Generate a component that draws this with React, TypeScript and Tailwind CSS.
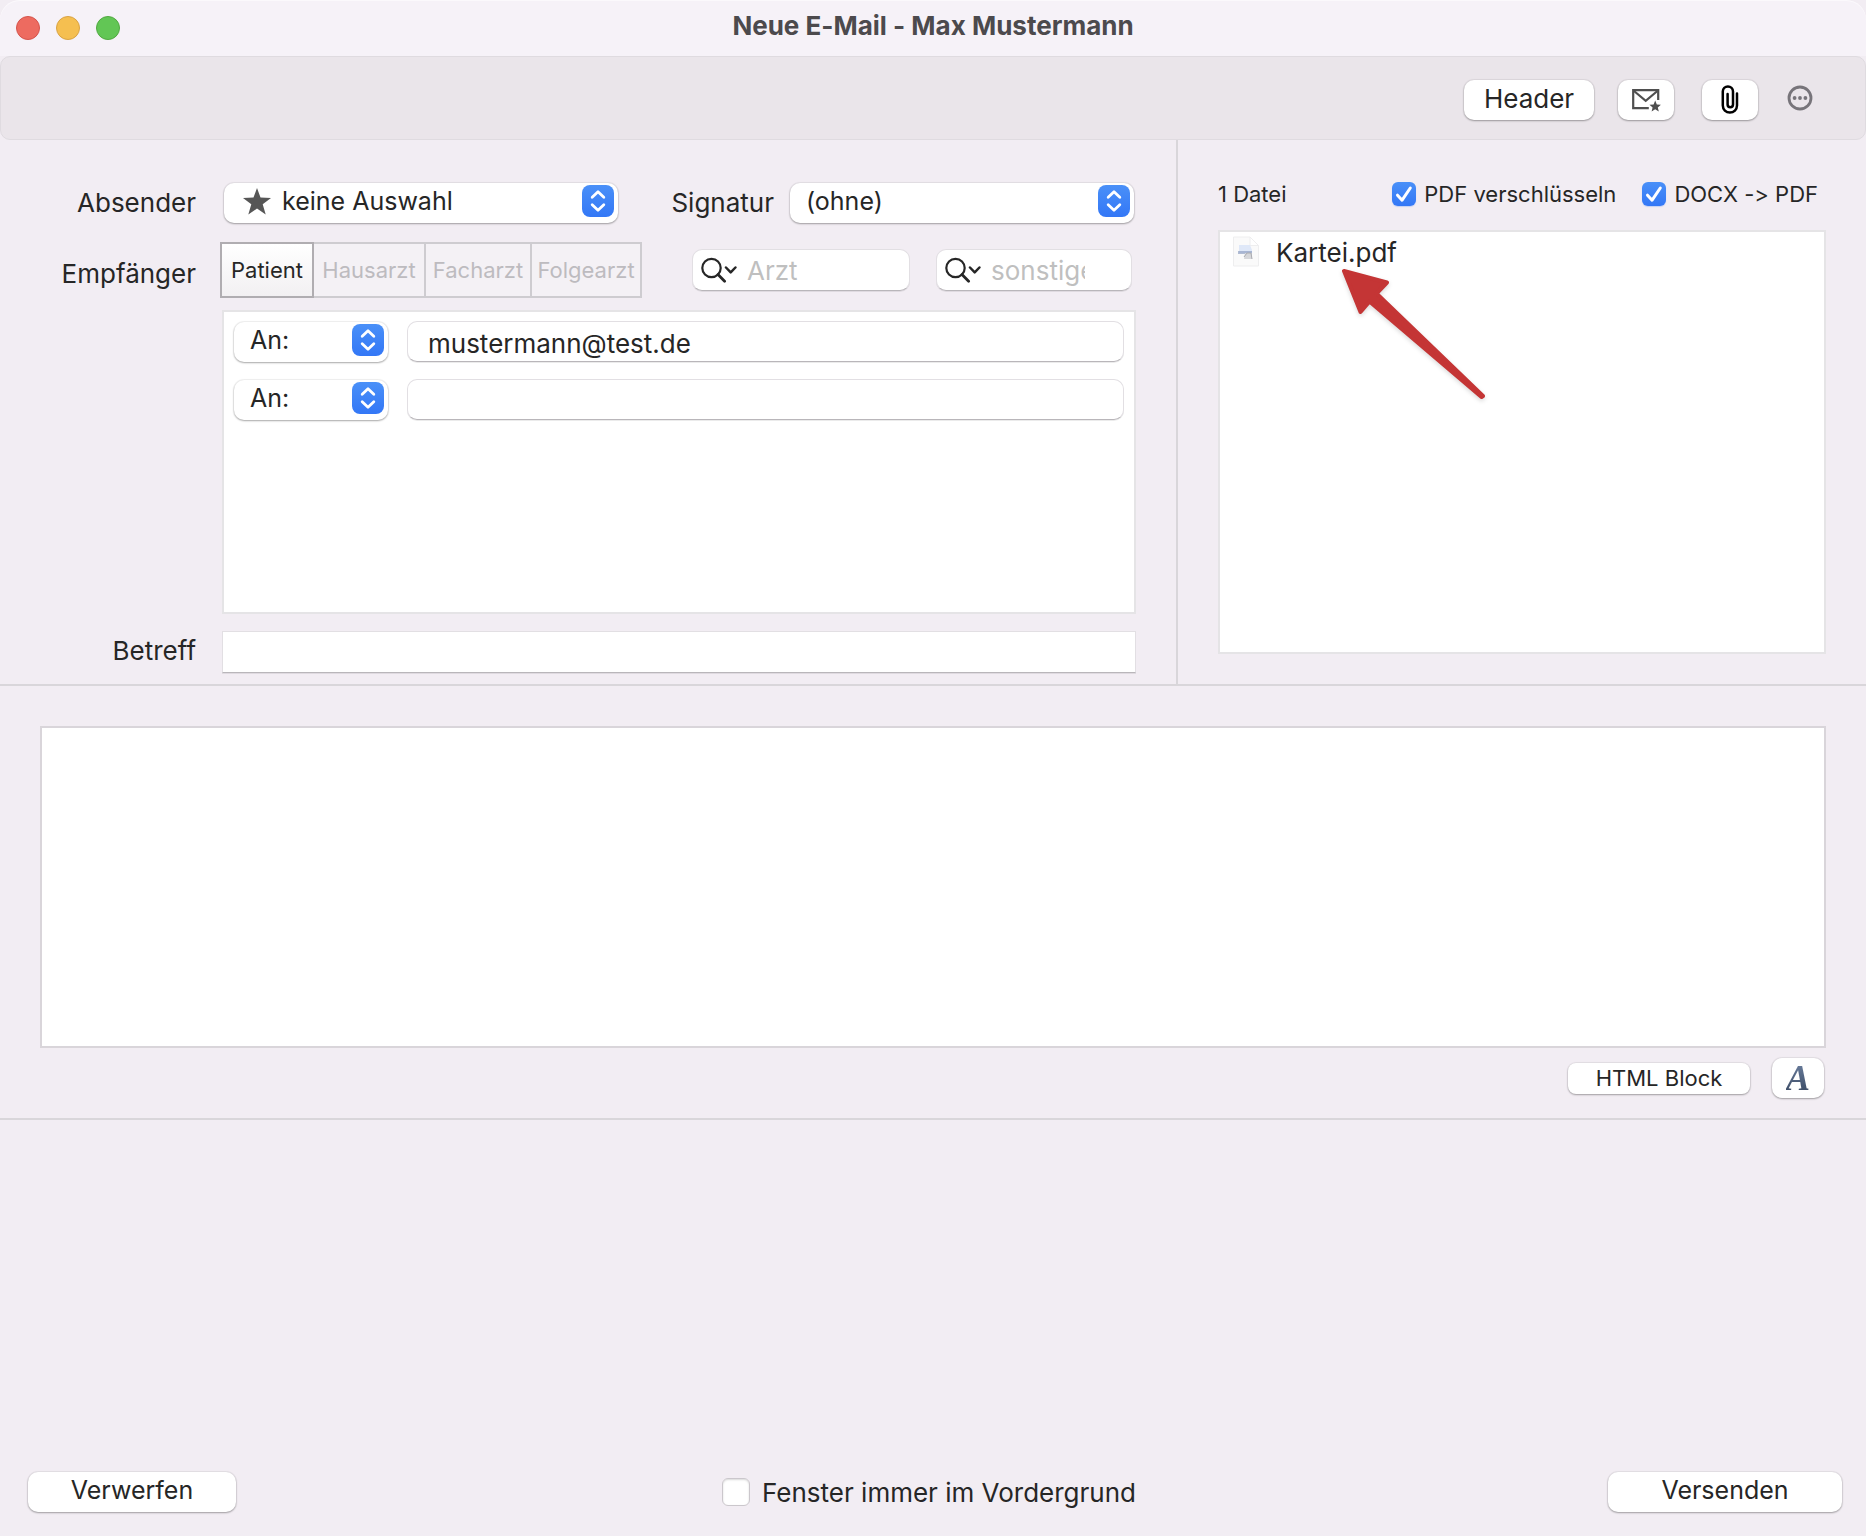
import { useState } from 'react'
import type { ReactNode } from 'react'

const raised = 'bg-white shadow-[0_0_1px_1px_rgba(0,0,0,0.06),0_1px_2px_rgba(0,0,0,0.3)]'
const field = 'border border-[#e2dfe3] border-b-[#b9b6ba] bg-white shadow-[0_1px_0_rgba(0,0,0,0.08)] outline-none'

interface PopupProps {
  label: string
  options: string[]
  className: string
  selectClass: string
  icon?: ReactNode
  id?: string
}

function Popup({ label, options, className, selectClass, icon, id }: PopupProps) {
  return (
    <div className={`relative h-10 shrink-0 ${className}`}>
      <select
        id={id}
        aria-label={label}
        className={`h-full w-full appearance-none rounded-[10px] pb-1 text-[25px] text-[#262626] outline-none ${raised} ${selectClass}`}
      >
        {options.map(o => (
          <option key={o}>{o}</option>
        ))}
      </select>
      {icon}
      <svg viewBox="0 0 32 32" className="pointer-events-none absolute top-1 right-1 h-8 w-8">
        <defs>
          <linearGradient id="popupBlue" x1="0" y1="0" x2="0" y2="1">
            <stop offset="0" stopColor="#4a90f8" />
            <stop offset="1" stopColor="#3377f6" />
          </linearGradient>
        </defs>
        <rect width="32" height="32" rx="8" fill="url(#popupBlue)" />
        <path
          d="M10.2 12.2 16 6.8l5.8 5.4M10.2 19.8l5.8 5.4 5.8-5.4"
          fill="none"
          stroke="#fff"
          strokeWidth="2.8"
          strokeLinecap="round"
          strokeLinejoin="round"
        />
      </svg>
    </div>
  )
}

function StarIcon() {
  return (
    <svg viewBox="0 0 28 27" className="pointer-events-none absolute top-[7px] left-[19px] h-[27px] w-7">
      <path fill="#565656" d="M14 0l3.5 9.6 10.5.4-8.3 6.3 3 10.2L14 20.6 5.3 26.5l3-10.2L0 10l10.5-.4z" />
    </svg>
  )
}

function SearchField({ name, placeholder, className }: { name: string; placeholder: string; className: string }) {
  return (
    <div className={`flex h-[42px] shrink-0 items-center rounded-[10px] pl-2 ${field} ${className}`}>
      <svg viewBox="0 0 36 26" className="h-[26px] w-9 shrink-0" fill="none" stroke="#262626" strokeLinecap="round">
        <circle cx="10.5" cy="11" r="9.2" strokeWidth="2.2" />
        <path d="M17 17.6l6.6 6.6" strokeWidth="2.8" />
        <path d="M25 10.5l4.7 4.8 4.7-4.8" strokeWidth="2.5" strokeLinejoin="round" />
      </svg>
      <input
        type="text"
        name={name}
        aria-label={name}
        placeholder={placeholder}
        className="ml-2.5 w-full min-w-0 bg-transparent text-[26px] outline-none placeholder:text-[#bfbfbf]"
      />
    </div>
  )
}

function CheckBox({ label, on = false, small = false }: { label: string; on?: boolean; small?: boolean }) {
  const [checked, setChecked] = useState(on)
  return (
    <label className={`flex items-center ${small ? 'gap-2 text-[22px]' : 'gap-3 pr-3 text-[26px]'}`}>
      <span className={`relative ${small ? 'h-6 w-6' : 'h-7 w-7'}`}>
        <input
          type="checkbox"
          checked={checked}
          onChange={e => setChecked(e.target.checked)}
          className="block h-full w-full appearance-none rounded-[6px] border border-[#cbc7cc] bg-white shadow-[inset_0_1px_2px_rgba(0,0,0,0.15)] checked:border-0 checked:bg-linear-to-b checked:from-[#4a90f8] checked:to-[#3377f6] checked:shadow-[0_1px_1px_rgba(51,119,246,0.25)]"
        />
        {checked && (
          <svg viewBox="0 0 24 24" className="pointer-events-none absolute inset-0">
            <path d="M5.5 13.2l4.6 5L18.3 6" fill="none" stroke="#fff" strokeWidth="3" strokeLinecap="round" strokeLinejoin="round" />
          </svg>
        )}
      </span>
      {label}
    </label>
  )
}

function Toolbar() {
  return (
    <div className="flex h-[84px] items-center justify-end rounded-[10px] border border-[#dfdbe0] bg-[#eae5ea] pt-1 pr-[52px]">
      <button className={`h-10 w-[130px] rounded-[10px] pb-0.5 text-[26px] leading-9 ${raised}`}>Header</button>
      <button aria-label="Vorlage" className={`ml-6 flex h-10 w-14 items-center justify-center rounded-[10px] ${raised}`}>
        <svg viewBox="0 0 30 24" className="h-6 w-[30px]">
          <path d="M27.2 12V2.1H2.2v18h15.6" fill="none" stroke="#4f4f4f" strokeWidth="2.2" />
          <path d="M3 3l11.7 9.8L26.4 3" fill="none" stroke="#4f4f4f" strokeWidth="2.2" />
          <path fill="#4f4f4f" d="M24.2 12.6l1.6 3.8 4.1.3-3.1 2.7 1 4-3.6-2.1-3.6 2.1 1-4-3.1-2.7 4.1-.3z" />
        </svg>
      </button>
      <button aria-label="Anhang" className={`ml-7 flex h-10 w-14 items-center justify-center rounded-[10px] ${raised}`}>
        <svg viewBox="0 0 18 30" className="h-[30px] w-[18px]">
          <path
            d="M16 8.5v12a7.1 7.1 0 0 1-14.2 0V6.6a5.1 5.1 0 0 1 10.2 0v13a2.7 2.7 0 0 1-5.4 0V9"
            fill="none"
            stroke="#000"
            strokeWidth="2.5"
            strokeLinecap="round"
          />
        </svg>
      </button>
      <button aria-label="Mehr" className="mb-1 ml-[29px]">
        <svg viewBox="0 0 26 26" className="h-[26px] w-[26px]" fill="#77747a">
          <circle cx="13" cy="13" r="11" fill="none" stroke="#77747a" strokeWidth="2.8" />
          <circle cx="7.6" cy="13" r="1.9" />
          <circle cx="13" cy="13" r="1.9" />
          <circle cx="18.4" cy="13" r="1.9" />
        </svg>
      </button>
    </div>
  )
}

const segments = [
  { label: 'Patient', width: 'w-[94px]' },
  { label: 'Hausarzt', width: 'w-28' },
  { label: 'Facharzt', width: 'w-[106px]' },
  { label: 'Folgearzt', width: 'w-[110px]' },
]

const recipients = ['mustermann@test.de', '']

function MailFields() {
  return (
    <section className="grid min-w-0 flex-1 grid-cols-[196px_1fr] gap-x-[26px] pt-[41px] pr-10 pb-[11px] text-[26px]">
      <label htmlFor="absender" className="h-10 pt-0.5 text-right leading-10">Absender</label>
      <div className="flex items-center justify-between px-0.5">
        <Popup
          id="absender"
          label="Absender"
          options={['keine Auswahl']}
          className="w-[394px]"
          selectClass="pl-[58px]"
          icon={<StarIcon />}
        />
        <div className="flex gap-4">
          <label htmlFor="signatur" className="h-10 pt-0.5 leading-10">Signatur</label>
          <Popup id="signatur" label="Signatur" options={['(ohne)']} className="w-[344px]" selectClass="pl-4" />
        </div>
      </div>

      <span className="mt-[21px] h-14 pt-1 text-right leading-[56px]">Empfänger</span>
      <div className="mt-[21px] flex items-center pr-1">
        <div className="-ml-0.5 flex h-14 shrink-0 text-[22px]">
          {segments.map((s, i) => (
            <button
              key={s.label}
              disabled={i > 0}
              className={`${s.width} ${
                i === 0
                  ? 'border-2 border-[#b0adb1] bg-linear-to-b from-white to-[#f2f0f2]'
                  : 'border-y-2 border-r-2 border-[#ceccd0] bg-[#f4f1f5] text-[#bdbbbf]'
              }`}
            >
              {s.label}
            </button>
          ))}
        </div>
        <SearchField name="Arzt" placeholder="Arzt" className="ml-auto w-[218px] pr-4" />
        <SearchField name="Empfänger" placeholder="sonstige" className="ml-[26px] w-[196px] pr-[46px]" />
      </div>

      <div className="col-start-2 mt-3 flex h-[304px] flex-col gap-4 border-2 border-[#e5e4e6] bg-white py-2 pr-2.5 pl-2.5">
        {recipients.map((r, i) => (
          <div key={i} className="flex gap-[19px]">
            <Popup label={`Art ${i + 1}`} options={['An:', 'Cc:', 'Bcc:']} className="w-[154px]" selectClass="pl-4" />
            <input
              type="email"
              aria-label={`Empfänger ${i + 1}`}
              defaultValue={r}
              className={`mt-px h-[41px] w-full min-w-0 rounded-[10px] px-5 pt-1 text-[26px] ${field}`}
            />
          </div>
        ))}
      </div>

      <label htmlFor="betreff" className="mt-[17px] text-right leading-10">Betreff</label>
      <input id="betreff" type="text" className={`mt-[17px] h-[42px] w-full px-3 ${field}`} />
    </section>
  )
}

function Attachments() {
  return (
    <section className="w-[690px] shrink-0 border-l-2 border-[#d9d6da] pt-10 pr-10 pl-10">
      <div className="flex h-[28px] items-center pr-2 text-[22px]">
        <span>1 Datei</span>
        <div className="ml-auto flex gap-[26px]">
          <CheckBox label="PDF verschlüsseln" on small />
          <CheckBox label="DOCX -> PDF" on small />
        </div>
      </div>
      <div className="relative mt-[22px] h-[424px] border-2 border-[#e5e4e6] bg-white">
        <div className="flex h-10 items-center gap-4 pl-3 text-[26px]">
          <svg viewBox="0 0 28 32" className="h-8 w-7">
            <path d="M1.5 1H18l8.5 8.5V30h-25z" fill="#fafafa" stroke="#eeeeef" />
            <path d="M18 1v8.5h8.5z" fill="#fff" stroke="#eeeeef" />
            <path d="M7 9h11l2 5v3H7z" fill="#dfe8f8" />
            <path d="M6 15h14v3H6z" fill="#8b9bbf" opacity=".65" />
            <path d="M13 17h7v6h-8z" fill="#d6d7da" />
            <path d="M12 21l3-4h4l1 6" fill="none" stroke="#a9abb0" />
          </svg>
          <span>Kartei.pdf</span>
        </div>
        <svg
          viewBox="0 0 144 132"
          className="pointer-events-none absolute top-[36px] left-[121px] h-[132px] w-36 drop-shadow-[0_2px_2px_rgba(0,0,0,0.15)]"
        >
          <path
            d="M3 3L46 14.5 35.5 25.5 142 128 140.5 129 28.5 33.5 19.5 44z"
            fill="#c43535"
            stroke="#c43535"
            strokeWidth="4"
            strokeLinejoin="round"
          />
        </svg>
      </div>
    </section>
  )
}

export default function App() {
  return (
    <div className="flex min-h-screen flex-col bg-[#f2edf3] font-['Inter','Liberation_Sans',sans-serif] text-[#262626] [font-feature-settings:'calt'_0]">
      <header className="grid h-14 grid-cols-[1fr_auto_1fr] items-center rounded-t-[20px] bg-[#f6f2f8] shadow-[inset_0_1px_0_#fbf9fc]">
        <div className="flex gap-4 pl-4">
          <button aria-label="Schließen" className="h-6 w-6 rounded-full border border-[#d5544c] bg-[#ed6b60]" />
          <button aria-label="Minimieren" className="h-6 w-6 rounded-full border border-[#d9a344] bg-[#f5bf50]" />
          <button aria-label="Zoomen" className="h-6 w-6 rounded-full border border-[#51a941] bg-[#62c655]" />
        </div>
        <h1 className="pb-1 text-[26px] leading-8 font-bold text-[#4c4a4d]">Neue E-Mail - Max Mustermann</h1>
      </header>
      <Toolbar />

      <main className="flex flex-1 flex-col">
        <div className="flex border-b-2 border-[#d9d6da]">
          <MailFields />
          <Attachments />
        </div>
        <section className="border-b-2 border-[#d9d6da] px-10 pt-10 pb-5">
          <textarea
            aria-label="Nachricht"
            className="block h-[322px] w-full resize-none border-2 border-[#d9d5da] bg-white p-3 text-[26px] outline-none"
          />
          <div className="mt-2.5 flex items-center justify-end gap-[22px] pr-0.5">
            <button className={`h-[31px] w-[182px] rounded-[8px] text-[22px] leading-7 ${raised}`}>HTML Block</button>
            <button aria-label="Schrift" className={`h-10 w-[52px] rounded-[10px] ${raised}`}>
              <span className="bg-linear-to-b from-[#7286a6] to-[#34435c] bg-clip-text font-['Liberation_Serif',serif] text-[36px] leading-10 font-bold text-transparent italic">
                A
              </span>
            </button>
          </div>
        </section>
      </main>

      <footer className="grid grid-cols-[1fr_auto_1fr] items-center pr-6 pb-6 pl-7 text-[25px]">
        <button className={`h-10 w-[208px] rounded-[10px] pb-0.5 ${raised}`}>Verwerfen</button>
        <CheckBox label="Fenster immer im Vordergrund" />
        <button className={`h-10 w-[234px] justify-self-end rounded-[10px] pb-0.5 ${raised}`}>Versenden</button>
      </footer>
    </div>
  )
}
